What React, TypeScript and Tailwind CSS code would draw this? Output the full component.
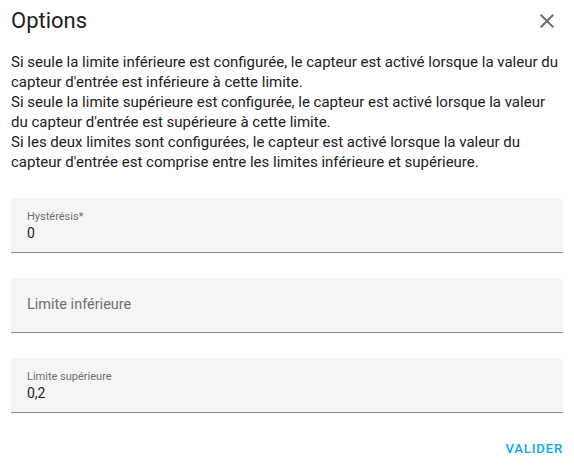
import React from "react";

const Field = ({ label, value }: { label: string; value?: string }) => {
  return (
    <div className="h-[55px] bg-[#f5f5f5] rounded-t-[4px] border-b border-[#8c8c8c] px-4">
      {value !== undefined ? (
        <div className="pt-[12px]">
          <div className="text-[11px] leading-[13px] text-[#6f6f6f]">{label}</div>
          <div className="text-[14px] leading-[17px] text-[#212121] mt-[2px]">{value}</div>
        </div>
      ) : (
        <div className="h-full flex items-center text-[14.5px] leading-[20px] text-[#6f6f6f]">{label}</div>
      )}
    </div>
  );
};

const App = () => {
  return (
    <div className="w-[574px] h-[466px] bg-white font-['Roboto',sans-serif] px-[11px] flex flex-col">
      {/* Header */}
      <div className="flex items-center justify-between h-[40px] pt-[2px]">
        <h2 className="text-[22px] leading-[28px] text-[#212121] font-normal">Options</h2>
        <button className="w-6 h-6 mr-[4px] text-[#6f6f6f]">
          <svg viewBox="0 0 24 24" width="24" height="24" fill="currentColor">
            <path d="M19 6.41 17.59 5 12 10.59 6.41 5 5 6.41 10.59 12 5 17.59 6.41 19 12 13.41 17.59 19 19 17.59 13.41 12z" />
          </svg>
        </button>
      </div>

      {/* Description */}
      <div className="mt-[12px] text-[15px] leading-[20px] text-[#212121]">
        <p>
          Si seule la limite inférieure est configurée, le capteur est activé lorsque la valeur du
          capteur d'entrée est inférieure à cette limite.
        </p>
        <p>
          Si seule la limite supérieure est configurée, le capteur est activé lorsque la valeur
          du capteur d'entrée est supérieure à cette limite.
        </p>
        <p>
          Si les deux limites sont configurées, le capteur est activé lorsque la valeur du
          capteur d'entrée est comprise entre les limites inférieure et supérieure.
        </p>
      </div>

      {/* Fields */}
      <div className="mt-[26px] flex flex-col gap-[25px]">
        <Field label="Hystérésis*" value="0" />
        <Field label="Limite inférieure" />
        <Field label="Limite supérieure" value="0,2" />
      </div>

      {/* Actions */}
      <div className="flex justify-end mt-[26px]">
        <button className="text-[13px] font-medium tracking-[0.9px] text-[#03a9f4] uppercase">
          Valider
        </button>
      </div>
    </div>
  );
};

export default App;
